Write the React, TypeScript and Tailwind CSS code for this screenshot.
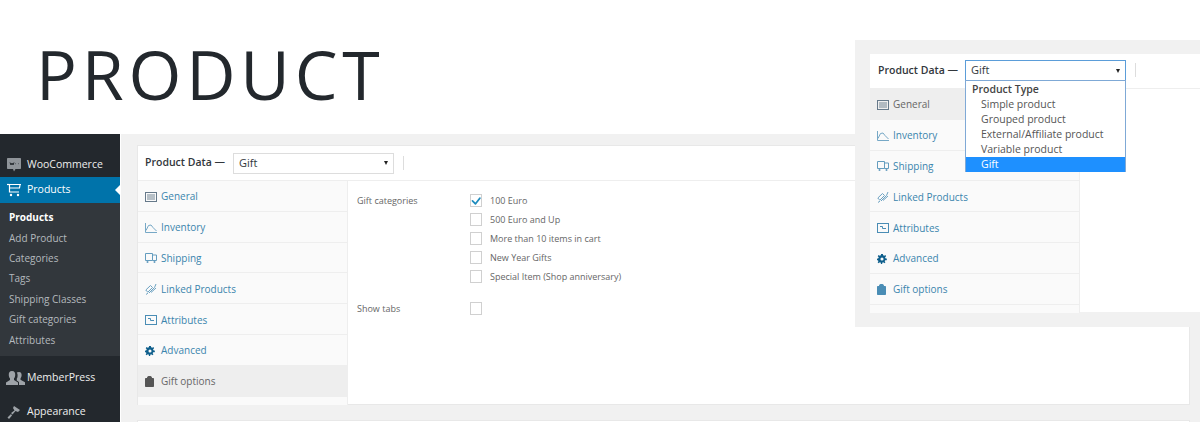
import type { ReactNode } from "react";
import { BsCheck } from "react-icons/bs";

const font = "font-['Open_Sans','Liberation_Sans',sans-serif]";

const GeneralIcon = () => (
  <svg width="12" height="10" viewBox="0 0 12 10">
    <rect x="0.5" y="0.5" width="11" height="9" fill="none" stroke="#66798a" />
    <rect x="2" y="2" width="8" height="6" fill="#66798a" opacity="0.45" />
  </svg>
);
const InventoryIcon = () => (
  <svg width="12" height="10" viewBox="0 0 12 10" fill="none" stroke="currentColor" opacity="0.75">
    <path d="M0.5 0V9.5H12" />
    <path d="M1 7.5L3.5 2.5L6 2L8 4.5L11.5 8" />
  </svg>
);
const ShippingIcon = () => (
  <svg width="12" height="12" viewBox="0 0 12 12" fill="none" stroke="currentColor" opacity="0.85">
    <path d="M0.5 1.5H7.5V8.5H0.5Z" />
    <path d="M7.5 3H11.5V8.5H7.5" />
    <circle cx="2.5" cy="10" r="1" fill="currentColor" stroke="none" />
    <circle cx="9.5" cy="10" r="1" fill="currentColor" stroke="none" />
  </svg>
);
const LinkedIcon = () => (
  <svg width="12" height="12" viewBox="0 0 12 12" fill="none" stroke="currentColor" opacity="0.8">
    <path d="M0.8 7L5.5 2.5L7.5 4.5L2.8 9.2Z" />
    <path d="M4 10L9.5 4.5L11 1" />
    <path d="M1 11.5L3 10" />
    <path d="M6 9.5L11 5" />
  </svg>
);
const AttributesIcon = () => (
  <svg width="12" height="10" viewBox="0 0 12 10" fill="none" stroke="currentColor">
    <rect x="0.5" y="0.5" width="11" height="9" />
    <path d="M3 3.5H5.5V5.5H9" />
  </svg>
);
const GearIcon = () => (
  <svg width="10" height="10" viewBox="0 0 11 11">
    <path
      fill="#0f5f8c"
      fillRule="evenodd"
      d="M4.5 0H6.5L6.8 1.5L8 2L9.3 1.2L10 2.6L8.9 3.6L9.2 4.6L11 5.2L10.6 6.8L9 6.8L8.4 7.9L9.3 9.2L8 10.1L6.9 9.1L6 9.4L5.6 11H4.4L4 9.4L3 9.1L1.9 10.1L0.7 9.2L1.6 7.9L1 6.8L0 6.8V5.2L1.5 4.6L1.9 3.6L0.8 2.6L1.7 1.2L3 2L4.2 1.5ZM5.5 3.8A1.7 1.7 0 1 0 5.5 7.2A1.7 1.7 0 1 0 5.5 3.8Z"
    />
  </svg>
);
const GiftIcon = () => (
  <svg width="9" height="11" viewBox="0 0 9 11">
    <path fill="currentColor" d="M2 2C2 0.5 3 0 4.5 0C6 0 7 0.5 7 2H8C8.6 2 9 2.4 9 3V10C9 10.6 8.6 11 8 11H1C0.4 11 0 10.6 0 10V3C0 2.4 0.4 2 1 2Z" />
  </svg>
);
const WooIcon = () => (
  <svg width="14" height="14" viewBox="0 0 14 14">
    <path fill="#8f9499" d="M1 0H13C13.6 0 14 .4 14 1V10C14 10.6 13.6 11 13 11H8.5L7 13.5L6 11H1C.4 11 0 10.6 0 10V1C0 .4 .4 0 1 0Z" />
    <path stroke="#23282d" fill="none" d="M3 4.5L4 7L5 5L6 7L7 4.5M8.5 5.7H9M11 5.7H11.5" />
  </svg>
);
const CartIcon = () => (
  <svg width="14" height="14" viewBox="0 0 14 14" fill="none" stroke="#fff" strokeWidth="1.2">
    <path d="M14 1.5H2.5V9H12" />
    <path d="M2.5 5H12.5L13 2" />
    <path d="M0 1.5H2.5" />
    <circle cx="4" cy="12" r="1.2" fill="#fff" stroke="none" />
    <circle cx="11" cy="12" r="1.2" fill="#fff" stroke="none" />
  </svg>
);
const UsersIcon = () => (
  <svg width="19" height="14" viewBox="0 0 19 14" fill="#9ea3a8">
    <path d="M6 0C8.5 0 9.5 2 9.2 4.5C9 6 8.4 7 8 7.6V9L12 11.5V14H0V11.5L4 9V7.6C3.6 7 3 6 2.8 4.5C2.5 2 3.5 0 6 0Z" />
    <path d="M13 1C15 1 15.8 2.6 15.6 4.6C15.4 6 15 6.8 14.5 7.4V8.8L19 11.2V14H13V11L10.8 9.6V7.6C11.4 6.6 11.6 6 11.6 4C11.6 3 11 2 10.8 1.6C11.4 1.2 12 1 13 1Z" />
  </svg>
);
const BrushIcon = () => (
  <svg width="14" height="14" viewBox="0 0 14 14" fill="#9ea3a8">
    <path d="M7 1L13 5L11 7L8.5 6L5.5 9.5L4 8L7.5 5.5L6 3Z" />
    <path d="M4 9L5 10.5L2 14L0.5 12.5Z" />
  </svg>
);

const tabs: { label: string; icon: ReactNode }[] = [
  { label: "General", icon: <GeneralIcon /> },
  { label: "Inventory", icon: <InventoryIcon /> },
  { label: "Shipping", icon: <ShippingIcon /> },
  { label: "Linked Products", icon: <LinkedIcon /> },
  { label: "Attributes", icon: <AttributesIcon /> },
  { label: "Advanced", icon: <GearIcon /> },
  { label: "Gift options", icon: <GiftIcon /> },
];

function Tabs({ active }: { active: string }) {
  return (
    <div className="w-[210px] shrink-0 bg-[#fafafa] border-r border-[#eee] pb-2">
      {tabs.map((t) => (
        <div
          key={t.label}
          className={
            "h-[30.8px] flex items-center border-b border-[#eee] pl-[7px] pt-[2px] text-[10px] " +
            (t.label === active ? "bg-[#eee] text-[#666]" : "text-[#3a85ad]")
          }
        >
          <span className={"w-[13px] flex " + (t.label === active ? "text-[#555]" : "text-[#4a8db5]")}>{t.icon}</span>
          <span className="ml-[3px]">{t.label}</span>
        </div>
      ))}
    </div>
  );
}

function Caret() {
  return <span className="w-0 h-0 border-x-[2.5px] border-x-transparent border-t-[4px] border-t-[#222]" />;
}

function CheckRow({ label, checked }: { label?: string; checked?: boolean }) {
  return (
    <div className="h-[19px] flex items-center">
      <span className="w-[12px] h-[13px] border border-[#d0d0d0] bg-white flex items-center justify-center">
        {checked && <BsCheck className="text-[#1e8cbe] text-[18px] shrink-0" />}
      </span>
      {label && <span className="ml-[8px] text-[9px] text-[#666]">{label}</span>}
    </div>
  );
}

const subItems = ["Add Product", "Categories", "Tags", "Shipping Classes", "Gift categories", "Attributes"];

export default function App() {
  return (
    <div className={font + " relative w-[1200px] h-[422px] overflow-hidden bg-white"}>
      <h1 className="h-[134px] pt-[31px] pl-[36px] text-[68px] leading-[86px] tracking-[4.8px] text-[#23282d]">PRODUCT</h1>

      <div className="flex h-[288px]">
        <aside className="w-[120px] shrink-0 bg-[#23282d] text-white pt-[19px] text-[10.5px]">
          <div className="h-[24px] flex items-center pl-[7px] gap-[6px] text-[#eee]">
            <WooIcon />
            <span>WooCommerce</span>
          </div>
          <div className="relative h-[26px] bg-[#0073aa] flex items-center pl-[7px] gap-[6px]">
            <CartIcon />
            <span>Products</span>
            <span className="absolute right-0 top-[8px] w-0 h-0 border-y-[5px] border-y-transparent border-r-[5px] border-r-white" />
          </div>
          <div className="bg-[#32373c] h-[153px] pt-[4.5px] pl-[9px] text-[10px] text-[#b4b9be]">
            <div className="h-[20.4px] flex items-center text-white font-bold">Products</div>
            {subItems.map((s) => (
              <div key={s} className="h-[20.4px] flex items-center">
                {s}
              </div>
            ))}
          </div>
          <div className="h-[42px] flex items-center pl-[6px] pt-[1px] gap-[2px] text-[#eee]">
            <UsersIcon />
            <span>MemberPress</span>
          </div>
          <div className="h-[26px] flex items-center pl-[7px] pt-[2px] gap-[6px] text-[#eee]">
            <BrushIcon />
            <span>Appearance</span>
          </div>
        </aside>

        <main className="flex-1 ml-[1px] bg-[#f1f1f1] pt-[11px] pl-[16px] pr-[10px]">
          <section className="bg-white h-[260px] border border-[#e8e8e8] flex flex-col">
            <div className="h-[35px] shrink-0 flex items-center border-b border-[#eee] pl-[7px]">
              <span className="text-[10.5px] font-semibold text-[#32373c] w-[88px]">Product Data —</span>
              <div className="w-[161px] h-[21px] border border-[#ddd] flex items-center justify-between px-[5px] text-[11px] text-[#32373c]">
                <span>Gift</span>
                <Caret />
              </div>
              <span className="ml-[9px] w-px h-[14px] bg-[#ddd]" />
            </div>
            <div className="flex flex-1">
              <Tabs active="Gift options" />
              <div className="pl-[9px] pt-[10px] text-[#666] text-[9px]">
                <div className="flex">
                  <span className="w-[113px] pt-[3px]">Gift categories</span>
                  <div>
                    <CheckRow label="100 Euro" checked />
                    <CheckRow label="500 Euro and Up" />
                    <CheckRow label="More than 10 items in cart" />
                    <CheckRow label="New Year Gifts" />
                    <CheckRow label="Special Item (Shop anniversary)" />
                  </div>
                </div>
                <div className="flex items-center mt-[13px]">
                  <span className="w-[113px]">Show tabs</span>
                  <CheckRow />
                </div>
              </div>
            </div>
          </section>
          <div className="bg-white h-[10px] mt-[15px] border border-[#e8e8e8]" />
        </main>
      </div>

      {/* zoomed inset with the open product type dropdown */}
      <div className="absolute left-[855px] top-[40px] w-[345px] h-[287px] bg-[#f1f1f1] pt-[14px] pl-[15px]">
        <div className="bg-white h-[258px] flex flex-col">
          <div className="h-[35px] shrink-0 flex items-center border-b border-[#eee] pl-[8px] pb-[2px]">
            <span className="text-[10.5px] font-semibold text-[#32373c] w-[87px] pt-[2px]">Product Data —</span>
            <div className="relative w-[161px] h-[21px] border border-[#5b9dd9] flex items-center justify-between px-[5px] pt-px text-[11px] text-[#32373c]">
              <span>Gift</span>
              <Caret />
              <div className="absolute left-[-1px] top-[19px] w-[161px] h-[92px] bg-white border border-[#7fa9d6] pt-px text-[10.5px] text-[#555]">
                <div className="h-[15px] leading-[15px] pl-[6px] font-semibold text-[#444]">Product Type</div>
                {["Simple product", "Grouped product", "External/Affiliate product", "Variable product"].map((o) => (
                  <div key={o} className="h-[15px] leading-[15px] pl-[15px]">
                    {o}
                  </div>
                ))}
                <div className="h-[15px] leading-[15px] pl-[15px] bg-[#1e90ff] text-white">Gift</div>
              </div>
            </div>
            <span className="ml-[9px] w-px h-[14px] bg-[#ddd]" />
          </div>
          <div className="flex flex-1">
            <Tabs active="General" />
          </div>
        </div>
      </div>
    </div>
  );
}
